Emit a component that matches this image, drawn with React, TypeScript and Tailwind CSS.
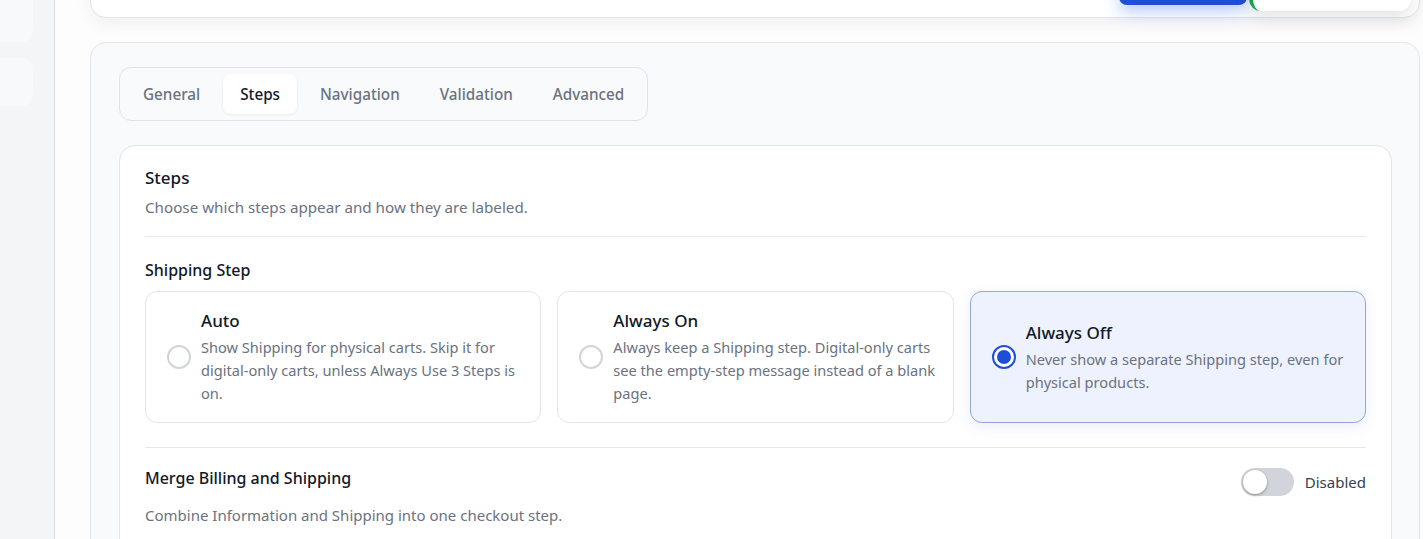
import React, { useState } from 'react';

type StepMode = 'auto' | 'on' | 'off';

const tabs = ['General', 'Steps', 'Navigation', 'Validation', 'Advanced'];

const shippingOptions: { id: StepMode; title: string; text: string }[] = [
  {
    id: 'auto',
    title: 'Auto',
    text: 'Show Shipping for physical carts. Skip it for digital-only carts, unless Always Use 3 Steps is on.',
  },
  {
    id: 'on',
    title: 'Always On',
    text: 'Always keep a Shipping step. Digital-only carts see the empty-step message instead of a blank page.',
  },
  {
    id: 'off',
    title: 'Always Off',
    text: 'Never show a separate Shipping step, even for physical products.',
  },
];

const Radio: React.FC<{ checked: boolean }> = ({ checked }) =>
  checked ? (
    <span className="shrink-0 w-6 h-6 rounded-full border-2 border-[#1d4ed8] bg-white flex items-center justify-center">
      <span className="w-[14px] h-[14px] rounded-full bg-[#1d4ed8]" />
    </span>
  ) : (
    <span className="shrink-0 w-6 h-6 rounded-full border-2 border-[#d1d5db] bg-white" />
  );

const OptionCard: React.FC<{
  title: string;
  text: string;
  selected: boolean;
  onSelect: () => void;
}> = ({ title, text, selected, onSelect }) => (
  <button
    type="button"
    onClick={onSelect}
    className={`flex items-center gap-[10px] text-left rounded-xl border pl-[21px] pr-[14px] py-[17px] ${
      selected
        ? 'bg-[#eef2fe] border-[#94a6d8] shadow-[0_4px_14px_rgba(59,91,219,0.10)]'
        : 'bg-white border-[#e2e5ea]'
    }`}
  >
    <Radio checked={selected} />
    <div>
      <div className="text-[17px] leading-6 font-medium text-[#111827]">{title}</div>
      <p className="mt-[3px] text-[14.6px] leading-[23px] text-[#6b7280]">{text}</p>
    </div>
  </button>
);

const Toggle: React.FC<{ on: boolean; onChange: () => void }> = ({ on, onChange }) => (
  <button
    type="button"
    onClick={onChange}
    className={`relative w-[53px] h-[28px] rounded-full transition-colors ${on ? 'bg-[#1d4ed8]' : 'bg-[#d1d5db]'}`}
  >
    <span
      className={`absolute top-[2px] w-6 h-6 rounded-full bg-white shadow-[0_1px_3px_rgba(0,0,0,0.35)] transition-all ${
        on ? 'left-[27px]' : 'left-[2px]'
      }`}
    />
  </button>
);

export default function App() {
  const [tab, setTab] = useState('Steps');
  const [mode, setMode] = useState<StepMode>('off');
  const [merge, setMerge] = useState(false);

  return (
    <div className="flex h-[539px] w-full overflow-hidden bg-[#fdfdfe] font-['Noto_Sans',_'Open_Sans',_sans-serif]">
      {/* sidebar */}
      <aside className="w-[55px] shrink-0 bg-[#f3f5f7] border-r border-[#dcdfe3] flex flex-col gap-4 pr-[21px]">
        <div className="-ml-4 -mt-6 h-[66px] rounded-xl bg-[#f8f9fa]" />
        <div className="-ml-4 h-[48px] rounded-xl bg-[#f8f9fa]" />
      </aside>

      <main className="flex-1 min-w-0 pl-[35px] pr-[3px] flex flex-col gap-6">
        {/* page header card, with the save button and a toast peeking in */}
        <div className="relative -mt-8 h-[50px] shrink-0 rounded-2xl bg-white border border-[#e3e5e8] shadow-[0_6px_18px_rgba(15,23,42,0.06)]">
          <div className="absolute right-[172px] top-[16px] w-[128px] h-[20px] rounded-lg bg-[#1d4ed8] shadow-[0_6px_16px_rgba(37,99,235,0.35)]" />
          <div className="absolute right-[8px] top-[8px] w-[162px] h-[34px] rounded-xl bg-white border-l-4 border-[#16a34a] shadow-[0_6px_16px_rgba(15,23,42,0.12)]" />
        </div>

        {/* settings panel */}
        <section className="rounded-2xl border border-[#e2e5e9] bg-[#f8fafc] pl-[28px] pr-[27px] pt-[24px]">
          <div className="inline-flex items-center gap-[6px] rounded-xl border border-[#dfe2e7] bg-[#f8fafc] p-[6px]">
            {tabs.map((t) => (
              <button
                key={t}
                type="button"
                onClick={() => setTab(t)}
                className={`h-10 px-[17px] rounded-lg text-[15.25px] font-medium ${
                  tab === t
                    ? 'bg-white text-[#111827] shadow-[0_1px_3px_rgba(15,23,42,0.08)]'
                    : 'text-[#6b7280]'
                }`}
              >
                {t}
              </button>
            ))}
          </div>

          <div className="mt-6 rounded-2xl border border-[#e2e5e9] bg-white px-[25px] pt-[20px] pb-8">
            <h2 className="text-[17px] leading-6 font-medium text-[#111827]">Steps</h2>
            <p className="mt-[6px] text-[15.2px] leading-[22px] text-[#6b7280]">
              Choose which steps appear and how they are labeled.
            </p>

            <div className="mt-[18px] border-t border-[#e5e7eb]" />

            <h3 className="mt-[22px] text-[16px] leading-[22px] font-medium text-[#111827]">Shipping Step</h3>
            <div className="mt-[10px] grid grid-cols-3 gap-4">
              {shippingOptions.map((o) => (
                <OptionCard
                  key={o.id}
                  title={o.title}
                  text={o.text}
                  selected={mode === o.id}
                  onSelect={() => setMode(o.id)}
                />
              ))}
            </div>

            <div className="mt-6 border-t border-[#e5e7eb]" />

            <div className="mt-[19px] flex items-start justify-between">
              <div>
                <h3 className="text-[16px] leading-[22px] font-medium text-[#111827]">Merge Billing and Shipping</h3>
                <p className="mt-[15px] text-[15px] leading-[22px] text-[#6b7280]">
                  Combine Information and Shipping into one checkout step.
                </p>
              </div>
              <div className="mt-[1px] flex items-center gap-[11px]">
                <Toggle on={merge} onChange={() => setMerge(!merge)} />
                <span className="text-[15px] text-[#374151]">{merge ? 'Enabled' : 'Disabled'}</span>
              </div>
            </div>
          </div>
        </section>
      </main>
    </div>
  );
}
